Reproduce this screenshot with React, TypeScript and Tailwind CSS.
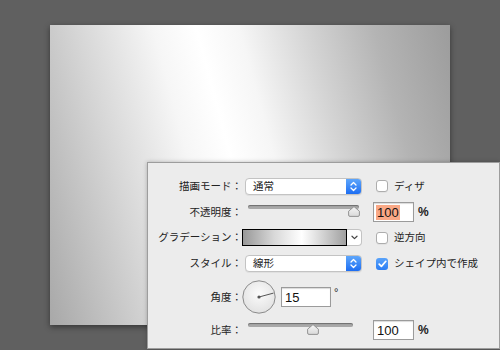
import React from "react";

function Select({ value }: { value: string }) {
  return (
    <div className="ml-[3px] flex h-[17px] w-[117px] overflow-hidden rounded-[4px] border border-[#c3c3c3] bg-white shadow-[0_1px_0_rgba(0,0,0,0.05)]">
      <div className="flex flex-1 items-center pl-[7px] text-[10.5px] leading-none text-[#222]">{value}</div>
      <div className="flex w-[15px] items-center justify-center bg-gradient-to-b from-[#5ea6fb] to-[#1c6df2]">
        <svg width="7" height="11" viewBox="0 0 7 11" fill="none" stroke="white" strokeWidth="1.3" strokeLinecap="round" strokeLinejoin="round">
          <polyline points="1,4 3.5,1.5 6,4" />
          <polyline points="1,7 3.5,9.5 6,7" />
        </svg>
      </div>
    </div>
  );
}

function Checkbox({ checked, label }: { checked?: boolean; label: string }) {
  return (
    <div className="ml-[3px] flex items-center gap-[6px]">
      {checked ? (
        <div className="flex h-[12px] w-[12px] items-center justify-center rounded-[3px] bg-gradient-to-b from-[#5aa3fa] to-[#2a7df4]">
          <svg width="9" height="8" viewBox="0 0 9 8" fill="none" stroke="white" strokeWidth="1.7" strokeLinecap="round" strokeLinejoin="round">
            <polyline points="1.2,4.2 3.4,6.4 7.8,1.3" />
          </svg>
        </div>
      ) : (
        <div className="h-[12px] w-[12px] rounded-[3px] border border-[#adadad] bg-white shadow-[0_1px_0_rgba(0,0,0,0.04)]" />
      )}
      <span className="text-[10.5px] leading-none text-[#222]">{label}</span>
    </div>
  );
}

function Slider({ width, thumb }: { width: number; thumb: number }) {
  return (
    <div className="relative ml-[6px] mb-[3px] h-[12px]" style={{ width }}>
      <div className="h-[4px] w-full rounded-full bg-[#a8a8a8] shadow-[inset_0_1px_1px_rgba(0,0,0,0.35)]" />
      <svg className="absolute top-[1px]" style={{ left: thumb - 6 }} width="12" height="11" viewBox="0 0 12 11">
        <defs>
          <linearGradient id={`tg${thumb}`} x1="0" y1="0" x2="0" y2="1">
            <stop offset="0" stopColor="#f6f6f6" />
            <stop offset="1" stopColor="#d9d9d9" />
          </linearGradient>
        </defs>
        <path d="M6 0.6 L11.4 5.2 L11.4 9 Q11.4 10.4 10 10.4 L2 10.4 Q0.6 10.4 0.6 9 L0.6 5.2 Z" fill={`url(#tg${thumb})`} stroke="#8a8a8a" strokeWidth="0.9" />
      </svg>
    </div>
  );
}

function NumField({ value, width, selected }: { value: string; width: number; selected?: boolean }) {
  return (
    <div
      className="flex h-[20px] items-center border border-[#9b9b9b] bg-white pl-[2px] shadow-[inset_0_1px_1px_rgba(0,0,0,0.15)] font-['Liberation_Sans',Arial,sans-serif] text-[13px] leading-none text-[#111]"
      style={{ width }}
    >
      <span className={selected ? "bg-[#f9a886] px-[1px] py-[1px]" : "px-[1px] py-[1px]"}>{value}</span>
    </div>
  );
}

function Row({ label, h, children, right }: { label: string; h: string; children: React.ReactNode; right?: React.ReactNode }) {
  return (
    <div className={`flex items-center ${h}`}>
      <div className="w-[94px] text-right text-[10.5px] leading-none text-[#222]">{label}</div>
      <div className="flex w-[131px] items-center">{children}</div>
      <div className="flex items-center">{right}</div>
    </div>
  );
}

export default function App() {
  return (
    <div className="relative h-[350px] w-[500px] overflow-hidden bg-[#606060] font-['Noto_Sans_CJK_JP','Noto_Sans',sans-serif]">
      <div className="ml-[50px] pt-[25px]">
        <div className="h-[300px] w-[400px] bg-[linear-gradient(75deg,#a8a8a8_0%,#d6d6d6_22%,#f6f6f6_38%,#ffffff_47%,#f6f6f6_56%,#d4d4d4_70%,#b4b4b4_84%,#9c9c9c_100%)] shadow-[0_2px_6px_rgba(0,0,0,0.45)]" />
      </div>

      <div className="absolute left-[147px] top-[162px] h-[187px] w-[353px] border border-[#9d9d9d] bg-[#ececec] pt-[10px] shadow-[0_0_4px_rgba(0,0,0,0.25)]">
        <Row label="描画モード：" h="h-[26px]" right={<Checkbox label="ディザ" />}>
          <Select value="通常" />
        </Row>
        <Row
          label="不透明度："
          h="h-[26px]"
          right={
            <div className="flex items-center gap-[4px]">
              <NumField value="100" width={41} selected />
              <span className="font-['Liberation_Sans',Arial,sans-serif] text-[12px] font-semibold text-[#222]">%</span>
            </div>
          }
        >
          <Slider width={111} thumb={106} />
        </Row>
        <Row label="グラデーション：" h="h-[25px]" right={<Checkbox label="逆方向" />}>
          <div className="flex h-[17px]">
            <div className="h-[17px] w-[105px] border border-black bg-[linear-gradient(90deg,#989898_0%,#d8d8d8_30%,#ffffff_57%,#e8e8e8_68%,#a0a0a0_100%)]" />
            <div className="flex w-[15px] items-center justify-center rounded-r-[4px] border border-l-0 border-[#c3c3c3] bg-white">
              <svg width="7" height="5" viewBox="0 0 7 5" fill="none" stroke="#444" strokeWidth="1.2" strokeLinecap="round" strokeLinejoin="round">
                <polyline points="1,1.2 3.5,3.6 6,1.2" />
              </svg>
            </div>
          </div>
        </Row>
        <Row label="スタイル：" h="h-[27px]" right={<Checkbox checked label="シェイプ内で作成" />}>
          <Select value="線形" />
        </Row>
        <Row label="角度：" h="h-[40px]">
          <div className="flex items-center">
            <svg width="34" height="34" viewBox="0 0 34 34">
              <defs>
                <radialGradient id="dial" cx="0.5" cy="0.4" r="0.6">
                  <stop offset="0" stopColor="#fbfbfb" />
                  <stop offset="1" stopColor="#e2e2e2" />
                </radialGradient>
              </defs>
              <circle cx="17" cy="17" r="16.2" fill="url(#dial)" stroke="#808080" strokeWidth="0.9" />
              <line x1="17" y1="17" x2="31.5" y2="13.1" stroke="#555" strokeWidth="1" />
              <circle cx="17" cy="17" r="1.6" fill="#555" />
            </svg>
            <div className="ml-[5px] flex items-start gap-[3px]">
              <NumField value="15" width={50} />
              <span className="-mt-[3px] font-['Liberation_Sans',Arial,sans-serif] text-[11px] text-[#222]">°</span>
            </div>
          </div>
        </Row>
        <Row
          label="比率："
          h="h-[26px]"
          right={
            <div className="flex items-center gap-[4px]">
              <NumField value="100" width={41} />
              <span className="font-['Liberation_Sans',Arial,sans-serif] text-[12px] font-semibold text-[#222]">%</span>
            </div>
          }
        >
          <Slider width={105} thumb={65} />
        </Row>
      </div>
    </div>
  );
}
